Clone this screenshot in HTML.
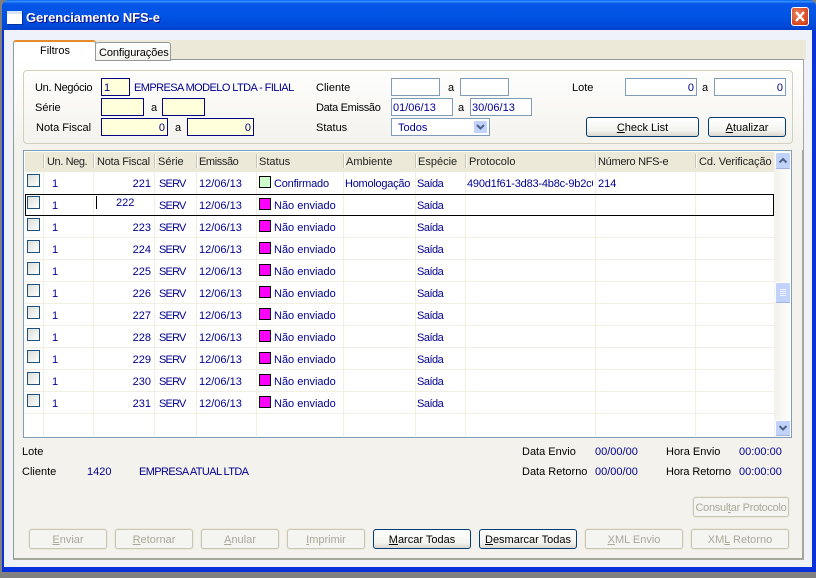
<!DOCTYPE html>
<html><head><meta charset="utf-8"><style>
html,body{margin:0;padding:0;width:816px;height:578px;overflow:hidden;background:#808080}
*{box-sizing:border-box}
div,span.t{position:absolute}
.t{position:absolute;white-space:nowrap;font:11px/13px "Liberation Sans",sans-serif;color:#000;margin-top:1px}
.b{color:#000090}
.h{color:#222;top:155px}
.sv{left:159px;letter-spacing:-.8px}
.sd{left:417px;letter-spacing:-.5px}
.d{left:199px}
.st{left:274px}
.n{right:665px}
.i{position:absolute;height:18px;border:1px solid #7f9db9;background:#fff;color:#000090;font:11px/18px "Liberation Sans",sans-serif;padding:0 2px}
.y{background:#ffffdc;border-color:#000080}
.r{text-align:right}
.vl{width:1px;background:#f1efe2;top:172px;height:264px}
.hl{left:25px;width:749px;height:1px;background:#f1efe2}
.s{width:2px;height:14px;top:154px;background:#fff;border-left:1px solid #cbc7b8}
.c{left:27px;width:13px;height:13px;border:1px solid #1c5180;background:linear-gradient(135deg,#dcdcd7,#fff)}
.q{left:259px;width:12px;height:12px;border:1px solid #000;background:#f0f}
.btn{position:absolute;height:20px;border:1px solid #003c74;border-radius:3px;background:linear-gradient(#fff,#f3f3ef 70%,#dcd8ce);font:11px/20px "Liberation Sans",sans-serif;text-align:center;color:#000;white-space:nowrap}
.dis{border-color:#c9c7ba;background:#f4f4f0;color:#aca899;box-shadow:0 0 0 1px #ece9d8}
u{text-decoration:underline}
</style></head><body>
<div style="left:2px;top:0;width:814px;height:572px;background:#0831d9;border-radius:7px 7px 0 0"></div>
<div style="left:2px;top:0;width:814px;height:31px;border-radius:7px 7px 0 0;background:linear-gradient(#0058ee 0,#3593ff 4%,#0655e8 12%,#0055e5 50%,#0048d8 85%,#0040c8)"></div>
<div style="left:4px;top:30px;width:808px;height:537px;background:#f0f2fa"></div>
<div style="left:7px;top:11px;width:15px;height:13px;background:#fff;border-top:3px solid #d8e4f8;box-shadow:1px 1px 0 #00309c"></div>
<span class="t" style="left:26px;top:10px;margin:0;font:bold 13px/15px 'Liberation Sans',sans-serif;letter-spacing:-.1px;color:#fff;text-shadow:1px 1px 0 #0f1089">Gerenciamento NFS-e</span>
<div style="left:791px;top:7px;width:18px;height:19px;border:1px solid #fff;border-radius:3px;background:radial-gradient(circle at 35% 35%,#e8835f,#d9461f 70%,#c23a12)"></div>
<svg style="position:absolute;left:791px;top:7px" width="18" height="19"><path d="M5 5l8 9M13 5l-8 9" stroke="#fff" stroke-width="2.2"/></svg>

<div style="left:14px;top:40px;width:792px;height:20px;background:#ece9d8"></div>
<div style="left:13px;top:59px;width:791px;height:501px;background:#f3f2ec;border:1px solid #919b9c;border-right:2px solid #a5a69c;border-bottom:2px solid #a5a69c"></div>
<div style="left:14px;top:60px;width:789px;height:90px;background:linear-gradient(#fff,#f3f2ec)"></div>
<div style="left:13px;top:40px;width:83px;height:21px;background:#fff;border:1px solid #919b9c;border-top:2px solid #e68b2c;border-bottom:0;border-radius:3px 3px 0 0"></div>
<div style="left:95px;top:42px;width:76px;height:19px;background:linear-gradient(#fff,#f3f2ec);border:1px solid #919b9c;border-radius:3px 3px 0 0"></div>
<span class="t" style="left:40px;top:44px">Filtros</span>
<span class="t" style="left:99px;top:46px;letter-spacing:-.1px">Configurações</span>

<div style="left:23px;top:70px;width:770px;height:74px;border:1px solid #d0d0bf;border-radius:4px"></div>
<span class="t" style="left:35px;top:81px;letter-spacing:-.3px">Un. Negócio</span>
<div class="i y" style="left:101px;top:78px;width:29px">1</div>
<span class="t b" style="left:134px;top:81px;letter-spacing:-.58px">EMPRESA MODELO LTDA - FILIAL</span>
<span class="t" style="left:35px;top:101px">Série</span>
<div class="i y" style="left:101px;top:98px;width:43px"></div>
<span class="t" style="left:151px;top:101px">a</span>
<div class="i y" style="left:162px;top:98px;width:43px"></div>
<span class="t" style="left:36px;top:121px">Nota Fiscal</span>
<div class="i y r" style="left:101px;top:118px;width:67px">0</div>
<span class="t" style="left:175px;top:121px">a</span>
<div class="i y r" style="left:187px;top:118px;width:67px">0</div>

<span class="t" style="left:316px;top:81px">Cliente</span>
<div class="i" style="left:391px;top:78px;width:49px"></div>
<span class="t" style="left:448px;top:81px">a</span>
<div class="i" style="left:460px;top:78px;width:49px"></div>
<span class="t" style="left:316px;top:101px;letter-spacing:-.33px">Data Emissão</span>
<div class="i" style="left:391px;top:98px;width:62px;padding-left:1px">01/06/13</div>
<span class="t" style="left:458px;top:101px">a</span>
<div class="i" style="left:470px;top:98px;width:62px;padding-left:1px">30/06/13</div>
<span class="t" style="left:316px;top:121px">Status</span>
<div class="i" style="left:391px;top:118px;width:99px;padding-left:6px;line-height:19px">Todos</div>
<div style="left:473px;top:120px;width:15px;height:14px;background:#c1d2fc;border:1px solid #fff;border-radius:2px"></div>
<svg style="position:absolute;left:473px;top:120px" width="15" height="14"><path d="M4 5l3.500 3.500L11 5" fill="none" stroke="#4d6185" stroke-width="2"/></svg>

<span class="t" style="left:572px;top:81px">Lote</span>
<div class="i r" style="left:625px;top:78px;width:72px">0</div>
<span class="t" style="left:702px;top:81px">a</span>
<div class="i r" style="left:714px;top:78px;width:72px">0</div>
<div class="btn" style="left:586px;top:117px;width:113px"><u>C</u>heck List</div>
<div class="btn" style="left:708px;top:117px;width:78px"><u>A</u>tualizar</div>

<div style="left:23px;top:150px;width:769px;height:288px;background:#fff;border:1px solid #7f9db9"></div>
<div style="left:25px;top:152px;width:749px;height:20px;background:#ece9d8"></div>
<div class="s" style="left:43px"></div><div class="s" style="left:93px"></div><div class="s" style="left:154px"></div><div class="s" style="left:196px"></div><div class="s" style="left:256px"></div><div class="s" style="left:343px"></div><div class="s" style="left:415px"></div><div class="s" style="left:465px"></div><div class="s" style="left:595px"></div><div class="s" style="left:695px"></div>
<span class="t h" style="left:47px;letter-spacing:-.4px">Un. Neg.</span>
<span class="t h" style="left:97px;letter-spacing:-.2px">Nota Fiscal</span>
<span class="t h" style="left:158px">Série</span>
<span class="t h" style="left:199px;letter-spacing:-.4px">Emissão</span>
<span class="t h" style="left:259px">Status</span>
<span class="t h" style="left:346px">Ambiente</span>
<span class="t h" style="left:418px">Espécie</span>
<span class="t h" style="left:469px">Protocolo</span>
<span class="t h" style="left:598px;letter-spacing:-.3px">Número NFS-e</span>
<span class="t h" style="left:699px;letter-spacing:-.1px">Cd. Verificação</span>

<div class="vl" style="left:43px"></div><div class="vl" style="left:93px"></div><div class="vl" style="left:154px"></div><div class="vl" style="left:196px"></div><div class="vl" style="left:256px"></div><div class="vl" style="left:343px"></div><div class="vl" style="left:415px"></div><div class="vl" style="left:465px"></div><div class="vl" style="left:595px"></div><div class="vl" style="left:695px"></div>
<div class="hl" style="top:237px"></div><div class="hl" style="top:259px"></div><div class="hl" style="top:281px"></div><div class="hl" style="top:303px"></div><div class="hl" style="top:325px"></div><div class="hl" style="top:347px"></div><div class="hl" style="top:369px"></div><div class="hl" style="top:391px"></div><div class="hl" style="top:413px"></div>

<div class="c" style="top:174px"></div><span class="t b" style="left:52px;top:177px">1</span><span class="t b n" style="top:177px">221</span><span class="t b sv" style="top:177px">SERV</span><span class="t b d" style="top:177px">12/06/13</span><div class="q" style="top:176px;background:#ccffcc"></div><span class="t b st" style="top:177px;letter-spacing:-.2px">Confirmado</span><span class="t b" style="left:345px;top:177px;letter-spacing:-.25px">Homologação</span><span class="t b sd" style="top:177px">Saída</span><div class="t b" style="left:467px;top:177px;width:126px;overflow:hidden;letter-spacing:-.2px">490d1f61-3d83-4b8c-9b2c0</div><span class="t b" style="left:598px;top:177px">214</span>

<div style="left:25px;top:194px;width:749px;height:22px;border:1px solid #000"></div>
<div class="c" style="top:196px"></div><span class="t b" style="left:52px;top:199px">1</span><div style="left:96px;top:196px;width:1px;height:13px;background:#000"></div><span class="t b" style="left:116px;top:196px">222</span><span class="t b sv" style="top:199px">SERV</span><span class="t b d" style="top:199px">12/06/13</span><div class="q" style="top:198px"></div><span class="t b st" style="top:199px">Não enviado</span><span class="t b sd" style="top:199px">Saída</span>

<div class="c" style="top:218px"></div><span class="t b" style="left:52px;top:221px">1</span><span class="t b n" style="top:221px">223</span><span class="t b sv" style="top:221px">SERV</span><span class="t b d" style="top:221px">12/06/13</span><div class="q" style="top:220px"></div><span class="t b st" style="top:221px">Não enviado</span><span class="t b sd" style="top:221px">Saída</span>
<div class="c" style="top:240px"></div><span class="t b" style="left:52px;top:243px">1</span><span class="t b n" style="top:243px">224</span><span class="t b sv" style="top:243px">SERV</span><span class="t b d" style="top:243px">12/06/13</span><div class="q" style="top:242px"></div><span class="t b st" style="top:243px">Não enviado</span><span class="t b sd" style="top:243px">Saída</span>
<div class="c" style="top:262px"></div><span class="t b" style="left:52px;top:265px">1</span><span class="t b n" style="top:265px">225</span><span class="t b sv" style="top:265px">SERV</span><span class="t b d" style="top:265px">12/06/13</span><div class="q" style="top:264px"></div><span class="t b st" style="top:265px">Não enviado</span><span class="t b sd" style="top:265px">Saída</span>
<div class="c" style="top:284px"></div><span class="t b" style="left:52px;top:287px">1</span><span class="t b n" style="top:287px">226</span><span class="t b sv" style="top:287px">SERV</span><span class="t b d" style="top:287px">12/06/13</span><div class="q" style="top:286px"></div><span class="t b st" style="top:287px">Não enviado</span><span class="t b sd" style="top:287px">Saída</span>
<div class="c" style="top:306px"></div><span class="t b" style="left:52px;top:309px">1</span><span class="t b n" style="top:309px">227</span><span class="t b sv" style="top:309px">SERV</span><span class="t b d" style="top:309px">12/06/13</span><div class="q" style="top:308px"></div><span class="t b st" style="top:309px">Não enviado</span><span class="t b sd" style="top:309px">Saída</span>
<div class="c" style="top:328px"></div><span class="t b" style="left:52px;top:331px">1</span><span class="t b n" style="top:331px">228</span><span class="t b sv" style="top:331px">SERV</span><span class="t b d" style="top:331px">12/06/13</span><div class="q" style="top:330px"></div><span class="t b st" style="top:331px">Não enviado</span><span class="t b sd" style="top:331px">Saída</span>
<div class="c" style="top:350px"></div><span class="t b" style="left:52px;top:353px">1</span><span class="t b n" style="top:353px">229</span><span class="t b sv" style="top:353px">SERV</span><span class="t b d" style="top:353px">12/06/13</span><div class="q" style="top:352px"></div><span class="t b st" style="top:353px">Não enviado</span><span class="t b sd" style="top:353px">Saída</span>
<div class="c" style="top:372px"></div><span class="t b" style="left:52px;top:375px">1</span><span class="t b n" style="top:375px">230</span><span class="t b sv" style="top:375px">SERV</span><span class="t b d" style="top:375px">12/06/13</span><div class="q" style="top:374px"></div><span class="t b st" style="top:375px">Não enviado</span><span class="t b sd" style="top:375px">Saída</span>
<div class="c" style="top:394px"></div><span class="t b" style="left:52px;top:397px">1</span><span class="t b n" style="top:397px">231</span><span class="t b sv" style="top:397px">SERV</span><span class="t b d" style="top:397px">12/06/13</span><div class="q" style="top:396px"></div><span class="t b st" style="top:397px">Não enviado</span><span class="t b sd" style="top:397px">Saída</span>

<div style="left:774px;top:152px;width:17px;height:285px;background:linear-gradient(90deg,#f3f1ec,#fefefb)"></div>
<div style="left:775px;top:152px;width:16px;height:17px;background:#c1d2fb;border:1px solid #fff;border-bottom-color:#9fb2e0;border-radius:2px"></div>
<svg style="position:absolute;left:775px;top:152px" width="16" height="17"><path d="M4.500 10.500l3.500-3.500 3.500 3.500" fill="none" stroke="#4d6185" stroke-width="2"/></svg>
<div style="left:775px;top:282px;width:16px;height:21px;background:#c1d2fb;border:1px solid #fff;border-bottom-color:#9fb2e0;border-radius:2px"></div>
<svg style="position:absolute;left:775px;top:282px" width="16" height="21"><path d="M5 7.500h6M5 9.500h6M5 11.500h6M5 13.500h6" stroke="#eef3fe"/></svg>
<div style="left:775px;top:420px;width:16px;height:16px;background:#c1d2fb;border:1px solid #fff;border-bottom-color:#9fb2e0;border-radius:2px"></div>
<svg style="position:absolute;left:775px;top:420px" width="16" height="16"><path d="M4.500 6l3.500 3.500L11.500 6" fill="none" stroke="#4d6185" stroke-width="2"/></svg>

<span class="t" style="left:22px;top:445px">Lote</span>
<span class="t" style="left:22px;top:465px">Cliente</span>
<span class="t b" style="left:87px;top:465px">1420</span>
<span class="t b" style="left:139px;top:465px;letter-spacing:-.6px">EMPRESA ATUAL LTDA</span>
<span class="t" style="left:522px;top:445px">Data Envio</span>
<span class="t b" style="left:595px;top:445px">00/00/00</span>
<span class="t" style="left:666px;top:445px">Hora Envio</span>
<span class="t b" style="left:739px;top:445px">00:00:00</span>
<span class="t" style="left:522px;top:465px">Data Retorno</span>
<span class="t b" style="left:595px;top:465px">00/00/00</span>
<span class="t" style="left:666px;top:465px;letter-spacing:-.1px">Hora Retorno</span>
<span class="t b" style="left:739px;top:465px">00:00:00</span>

<div class="btn dis" style="left:693px;top:497px;width:96px;letter-spacing:-.3px">Consul<u>t</u>ar Protocolo</div>
<div class="btn dis" style="left:29px;top:529px;width:78px"><u>E</u>nviar</div>
<div class="btn dis" style="left:115px;top:529px;width:78px"><u>R</u>etornar</div>
<div class="btn dis" style="left:201px;top:529px;width:78px"><u>A</u>nular</div>
<div class="btn dis" style="left:287px;top:529px;width:78px"><u>I</u>mprimir</div>
<div class="btn" style="left:373px;top:529px;width:98px"><u>M</u>arcar Todas</div>
<div class="btn" style="left:479px;top:529px;width:98px"><u>D</u>esmarcar Todas</div>
<div class="btn dis" style="left:585px;top:529px;width:98px"><u>X</u>ML Envio</div>
<div class="btn dis" style="left:691px;top:529px;width:98px">XM<u>L</u> Retorno</div>
</body></html>
